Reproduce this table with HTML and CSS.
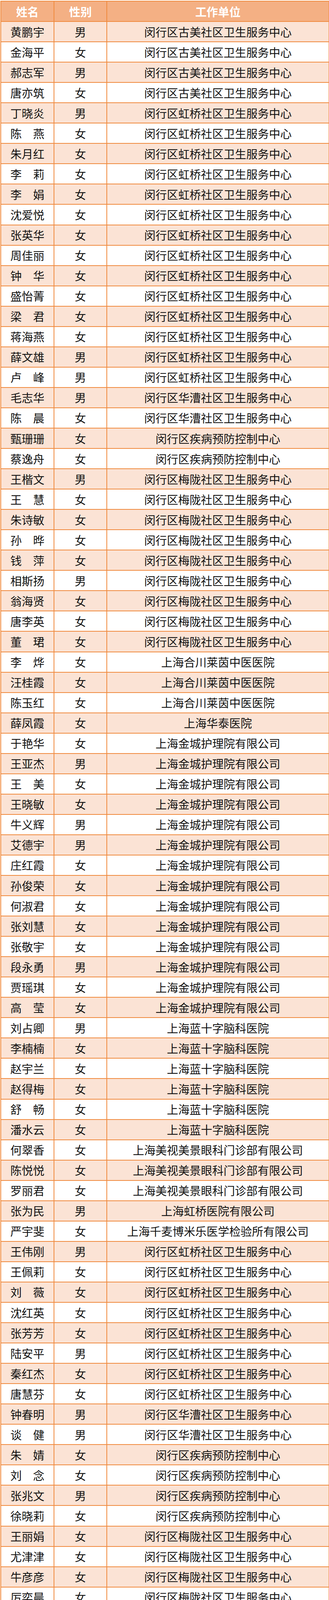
FILE: index.html
```html
<!DOCTYPE html>
<html lang="zh-CN">
<head>
<meta charset="utf-8">
<meta name="viewport" content="width=841">
<title>名单</title>
<link rel="stylesheet" href="styles.css">
</head>
<body>
<table class="roster">
<colgroup><col class="c-name"><col class="c-sex"><col class="c-unit"></colgroup>
<thead>
<tr><th>姓名</th><th>性别</th><th>工作单位</th></tr>
</thead>
<tbody>
<tr><td>黄鹏宇</td><td>男</td><td>闵行区古美社区卫生服务中心</td></tr>
<tr><td>金海平</td><td>女</td><td>闵行区古美社区卫生服务中心</td></tr>
<tr><td>郝志军</td><td>男</td><td>闵行区古美社区卫生服务中心</td></tr>
<tr><td>唐亦筑</td><td>女</td><td>闵行区古美社区卫生服务中心</td></tr>
<tr><td>丁晓炎</td><td>男</td><td>闵行区虹桥社区卫生服务中心</td></tr>
<tr><td>陈　燕</td><td>女</td><td>闵行区虹桥社区卫生服务中心</td></tr>
<tr><td>朱月红</td><td>女</td><td>闵行区虹桥社区卫生服务中心</td></tr>
<tr><td>李　莉</td><td>女</td><td>闵行区虹桥社区卫生服务中心</td></tr>
<tr><td>李　娟</td><td>女</td><td>闵行区虹桥社区卫生服务中心</td></tr>
<tr><td>沈爱悦</td><td>女</td><td>闵行区虹桥社区卫生服务中心</td></tr>
<tr><td>张英华</td><td>女</td><td>闵行区虹桥社区卫生服务中心</td></tr>
<tr><td>周佳丽</td><td>女</td><td>闵行区虹桥社区卫生服务中心</td></tr>
<tr><td>钟　华</td><td>女</td><td>闵行区虹桥社区卫生服务中心</td></tr>
<tr><td>盛怡菁</td><td>女</td><td>闵行区虹桥社区卫生服务中心</td></tr>
<tr><td>梁　君</td><td>女</td><td>闵行区虹桥社区卫生服务中心</td></tr>
<tr><td>蒋海燕</td><td>女</td><td>闵行区虹桥社区卫生服务中心</td></tr>
<tr><td>薛文雄</td><td>男</td><td>闵行区虹桥社区卫生服务中心</td></tr>
<tr><td>卢　峰</td><td>男</td><td>闵行区虹桥社区卫生服务中心</td></tr>
<tr><td>毛志华</td><td>男</td><td>闵行区华漕社区卫生服务中心</td></tr>
<tr><td>陈　晨</td><td>女</td><td>闵行区华漕社区卫生服务中心</td></tr>
<tr><td>甄珊珊</td><td>女</td><td>闵行区疾病预防控制中心</td></tr>
<tr><td>蔡逸舟</td><td>女</td><td>闵行区疾病预防控制中心</td></tr>
<tr><td>王楷文</td><td>男</td><td>闵行区梅陇社区卫生服务中心</td></tr>
<tr><td>王　慧</td><td>女</td><td>闵行区梅陇社区卫生服务中心</td></tr>
<tr><td>朱诗敏</td><td>女</td><td>闵行区梅陇社区卫生服务中心</td></tr>
<tr><td>孙　晔</td><td>女</td><td>闵行区梅陇社区卫生服务中心</td></tr>
<tr><td>钱　萍</td><td>女</td><td>闵行区梅陇社区卫生服务中心</td></tr>
<tr><td>相斯扬</td><td>男</td><td>闵行区梅陇社区卫生服务中心</td></tr>
<tr><td>翁海贤</td><td>女</td><td>闵行区梅陇社区卫生服务中心</td></tr>
<tr><td>唐李英</td><td>女</td><td>闵行区梅陇社区卫生服务中心</td></tr>
<tr><td>董　珺</td><td>女</td><td>闵行区梅陇社区卫生服务中心</td></tr>
<tr><td>李　烨</td><td>女</td><td>上海合川莱茵中医医院</td></tr>
<tr><td>汪桂霞</td><td>女</td><td>上海合川莱茵中医医院</td></tr>
<tr><td>陈玉红</td><td>女</td><td>上海合川莱茵中医医院</td></tr>
<tr><td>薛凤霞</td><td>女</td><td>上海华泰医院</td></tr>
<tr><td>于艳华</td><td>女</td><td>上海金城护理院有限公司</td></tr>
<tr><td>王亚杰</td><td>男</td><td>上海金城护理院有限公司</td></tr>
<tr><td>王　美</td><td>女</td><td>上海金城护理院有限公司</td></tr>
<tr><td>王晓敏</td><td>女</td><td>上海金城护理院有限公司</td></tr>
<tr><td>牛义辉</td><td>男</td><td>上海金城护理院有限公司</td></tr>
<tr><td>艾德宇</td><td>男</td><td>上海金城护理院有限公司</td></tr>
<tr><td>庄红霞</td><td>女</td><td>上海金城护理院有限公司</td></tr>
<tr><td>孙俊荣</td><td>女</td><td>上海金城护理院有限公司</td></tr>
<tr><td>何淑君</td><td>女</td><td>上海金城护理院有限公司</td></tr>
<tr><td>张刘慧</td><td>女</td><td>上海金城护理院有限公司</td></tr>
<tr><td>张敬宇</td><td>女</td><td>上海金城护理院有限公司</td></tr>
<tr><td>段永勇</td><td>男</td><td>上海金城护理院有限公司</td></tr>
<tr><td>贾瑶琪</td><td>女</td><td>上海金城护理院有限公司</td></tr>
<tr><td>高　莹</td><td>女</td><td>上海金城护理院有限公司</td></tr>
<tr><td>刘占卿</td><td>男</td><td>上海蓝十字脑科医院</td></tr>
<tr><td>李楠楠</td><td>女</td><td>上海蓝十字脑科医院</td></tr>
<tr><td>赵宇兰</td><td>女</td><td>上海蓝十字脑科医院</td></tr>
<tr><td>赵得梅</td><td>女</td><td>上海蓝十字脑科医院</td></tr>
<tr><td>舒　畅</td><td>女</td><td>上海蓝十字脑科医院</td></tr>
<tr><td>潘水云</td><td>女</td><td>上海蓝十字脑科医院</td></tr>
<tr><td>何翠香</td><td>女</td><td>上海美视美景眼科门诊部有限公司</td></tr>
<tr><td>陈悦悦</td><td>女</td><td>上海美视美景眼科门诊部有限公司</td></tr>
<tr><td>罗丽君</td><td>女</td><td>上海美视美景眼科门诊部有限公司</td></tr>
<tr><td>张为民</td><td>男</td><td>上海虹桥医院有限公司</td></tr>
<tr><td>严宇斐</td><td>女</td><td>上海千麦博米乐医学检验所有限公司</td></tr>
<tr><td>王伟刚</td><td>男</td><td>闵行区虹桥社区卫生服务中心</td></tr>
<tr><td>王佩莉</td><td>女</td><td>闵行区虹桥社区卫生服务中心</td></tr>
<tr><td>刘　薇</td><td>女</td><td>闵行区虹桥社区卫生服务中心</td></tr>
<tr><td>沈红英</td><td>女</td><td>闵行区虹桥社区卫生服务中心</td></tr>
<tr><td>张芳芳</td><td>女</td><td>闵行区虹桥社区卫生服务中心</td></tr>
<tr><td>陆安平</td><td>男</td><td>闵行区虹桥社区卫生服务中心</td></tr>
<tr><td>秦红杰</td><td>女</td><td>闵行区虹桥社区卫生服务中心</td></tr>
<tr><td>唐慧芬</td><td>女</td><td>闵行区虹桥社区卫生服务中心</td></tr>
<tr><td>钟春明</td><td>男</td><td>闵行区华漕社区卫生服务中心</td></tr>
<tr><td>谈　健</td><td>男</td><td>闵行区华漕社区卫生服务中心</td></tr>
<tr><td>朱　婧</td><td>女</td><td>闵行区疾病预防控制中心</td></tr>
<tr><td>刘　念</td><td>女</td><td>闵行区疾病预防控制中心</td></tr>
<tr><td>张兆文</td><td>男</td><td>闵行区疾病预防控制中心</td></tr>
<tr><td>徐晓莉</td><td>女</td><td>闵行区疾病预防控制中心</td></tr>
<tr><td>王丽娟</td><td>女</td><td>闵行区梅陇社区卫生服务中心</td></tr>
<tr><td>尤津津</td><td>女</td><td>闵行区梅陇社区卫生服务中心</td></tr>
<tr><td>牛彦彦</td><td>女</td><td>闵行区梅陇社区卫生服务中心</td></tr>
<tr><td>厉奕晨</td><td>女</td><td>闵行区梅陇社区卫生服务中心</td></tr>
<tr><td>汤　婕</td><td>女</td><td>闵行区梅陇社区卫生服务中心</td></tr>
<tr><td>李柳慧</td><td>女</td><td>闵行区梅陇社区卫生服务中心</td></tr>
<tr><td>张雅萍</td><td>女</td><td>闵行区梅陇社区卫生服务中心</td></tr>
<tr><td>赵　茜</td><td>女</td><td>闵行区梅陇社区卫生服务中心</td></tr>
<tr><td>赵彩平</td><td>女</td><td>闵行区梅陇社区卫生服务中心</td></tr>
<tr><td>钱赟婷</td><td>女</td><td>闵行区梅陇社区卫生服务中心</td></tr>
<tr><td>沈建军</td><td>男</td><td>闵行区申鑫社区卫生服务中心</td></tr>
<tr><td>沈艳婷</td><td>女</td><td>闵行区申鑫社区卫生服务中心</td></tr>
<tr><td>丁婷婷</td><td>女</td><td>闵行区吴泾社区卫生服务中心</td></tr>
<tr><td>徐晓霞</td><td>女</td><td>闵行区吴泾社区卫生服务中心</td></tr>
<tr><td>金爱萍</td><td>女</td><td>闵行区吴泾社区卫生服务中心</td></tr>
<tr><td>高春燕</td><td>女</td><td>闵行区吴泾社区卫生服务中心</td></tr>
<tr><td>李忠诚</td><td>男</td><td>闵行区吴泾社区卫生服务中心</td></tr>
<tr><td>刘绍群</td><td>男</td><td>闵行区中心医院</td></tr>
<tr><td>李欢庆</td><td>男</td><td>闵行区中心医院</td></tr>
<tr><td>郑　进</td><td>男</td><td>闵行区中心医院</td></tr>
<tr><td>郭锥锋</td><td>男</td><td>闵行区中心医院</td></tr>
<tr><td>常奇蒙</td><td>男</td><td>闵行区中心医院</td></tr>
<tr><td>尹现杰</td><td>女</td><td>闵行区颛桥社区卫生服务中心</td></tr>
<tr><td>李丽秋</td><td>女</td><td>闵行区颛桥社区卫生服务中心</td></tr>
<tr><td>唐　伟</td><td>男</td><td>上海永慈康复医院</td></tr>
<tr><td>代　梅</td><td>女</td><td>上海同康医院</td></tr>
<tr><td>孙　浩</td><td>男</td><td>上海同康医院</td></tr>
<tr><td>张　茹</td><td>女</td><td>上海同康医院</td></tr>
<tr><td>梁乐晨</td><td>男</td><td>上海同康医院</td></tr>
<tr><td>雷　磊</td><td>男</td><td>上海同康医院</td></tr>
<tr><td>臧雪颖</td><td>女</td><td>上海同康医院</td></tr>
<tr><td>潘鹏鹏</td><td>男</td><td>上海同康医院</td></tr>
<tr><td>王传丹</td><td>女</td><td>上海新起点康复医院有限公司</td></tr>
<tr><td>赵书卫</td><td>女</td><td>上海新起点康复医院有限公司</td></tr>
<tr><td>陶　然</td><td>女</td><td>上海新起点康复医院有限公司</td></tr>
<tr><td>杨　情</td><td>女</td><td>上海永慈康复医院</td></tr>
<tr><td>费　虹</td><td>女</td><td>上海永慈康复医院</td></tr>
<tr><td>顾　盼</td><td>女</td><td>上海永慈康复医院</td></tr>
</tbody>
</table>
</body>
</html>
```

FILE: styles.css
```css
html, body {
  margin: 0;
  padding: 0;
  background: #ffffff;
}

body {
  padding: 2px 1px 0;
}

.roster {
  width: 839px;
  table-layout: fixed;
  border-collapse: collapse;
  font-family: "Noto Sans CJK SC", "Noto Sans", sans-serif;
  font-size: 29px;
  color: #111111;
}

.c-name { width: 136px; }
.c-sex { width: 135px; }
.c-unit { width: 568px; }

.roster th,
.roster td {
  border: 2px solid #f08a3e;
  padding: 0;
  text-align: center;
  vertical-align: middle;
  line-height: 1;
  white-space: nowrap;
}

.roster tr {
  height: 52.06px;
}

.roster th {
  background: #f4b084;
  color: #ffffff;
  font-weight: 700;
}

.roster tbody tr:nth-child(odd) td {
  background: #fbe3d5;
}

.roster tbody tr:nth-child(even) td {
  background: #ffffff;
}
```
